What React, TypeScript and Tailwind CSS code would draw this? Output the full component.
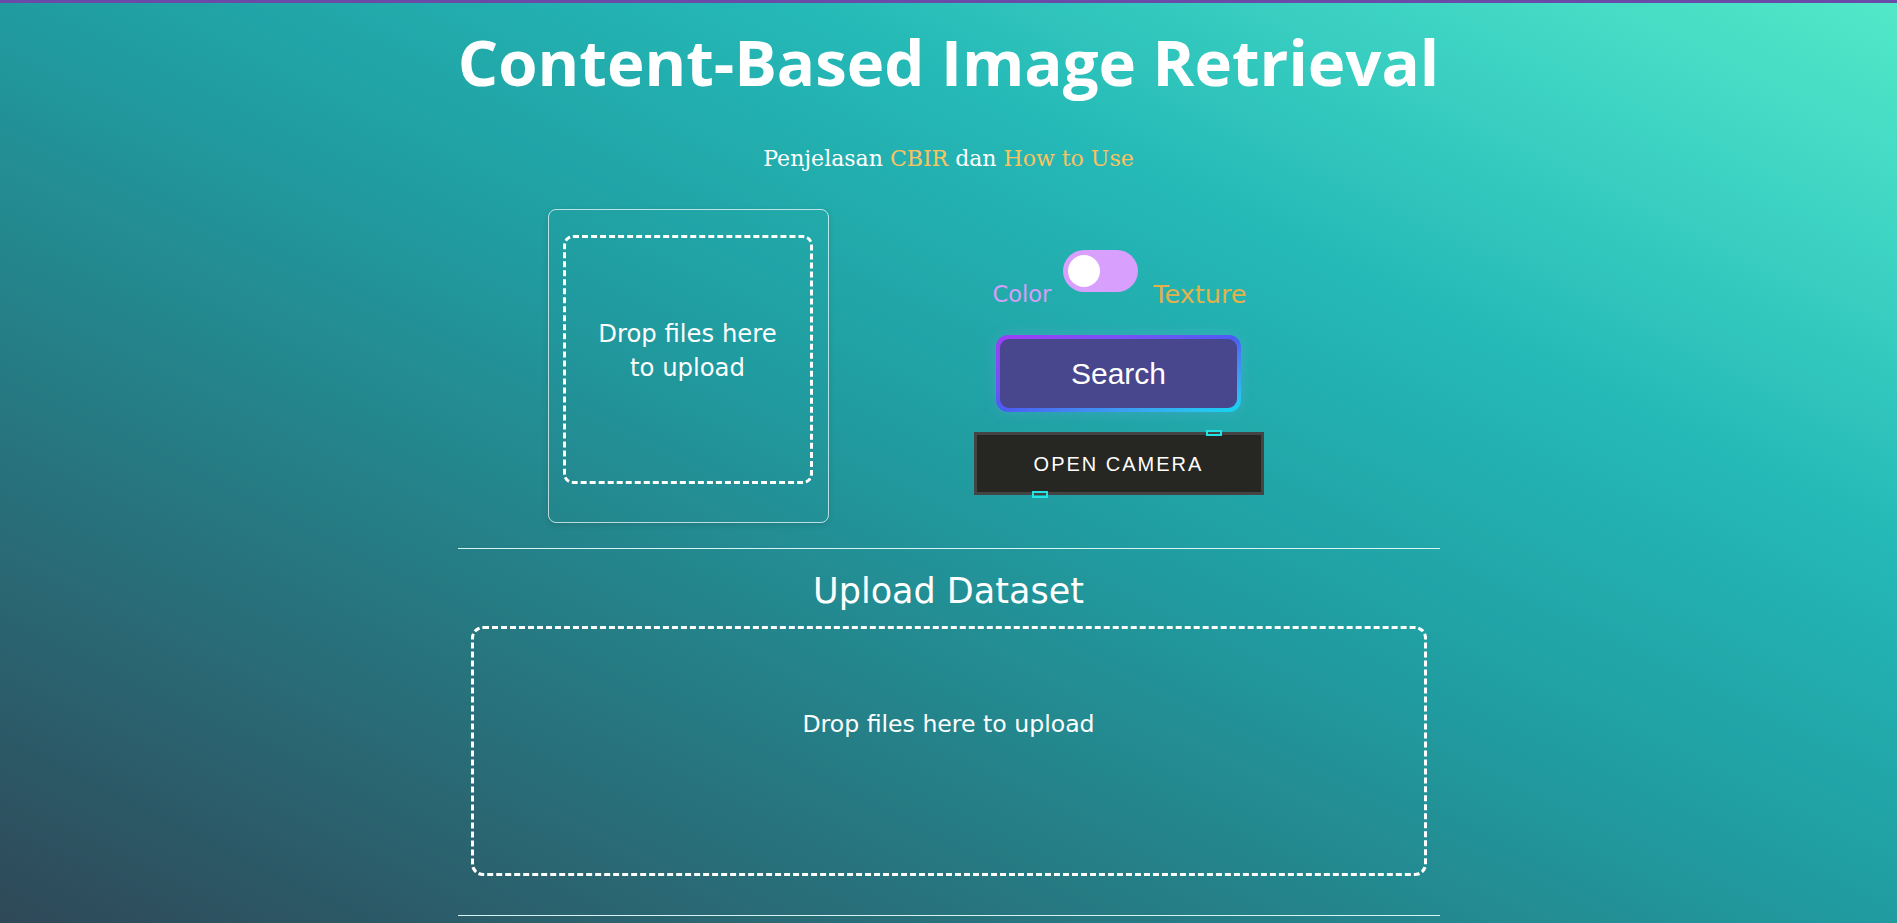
import React from "react";

const comic = { fontFamily: '"DejaVu Sans", "Noto Sans", sans-serif' };

function Toggle() {
  return (
    <div className="relative w-[75px] h-[42px] rounded-full bg-[#d8a0fc] mb-[16px]">
      <div className="absolute left-[5px] top-[5px] w-[32px] h-[32px] rounded-full bg-white" />
    </div>
  );
}

export default function App() {
  return (
    <div className="min-h-screen w-full bg-[linear-gradient(to_top_right,#2f4858_0%,#209ca0_50%,#24b8b6_70%,#3dd3c3_86%,#52e8c8_100%)] text-white">
      <div className="h-[3px] bg-[#6b4ba8]" />
      <div className="w-[982px] mx-auto">
        <h1
          className="mt-[27px] text-center text-[63.5px] font-bold leading-[64px] whitespace-nowrap"
          style={{ fontFamily: '"Open Sans", "Noto Sans", sans-serif' }}
        >
          Content-Based Image Retrieval
        </h1>

        <p
          className="mt-[53px] text-center text-[22px] leading-[24px]"
          style={{ fontFamily: '"DejaVu Serif", "Liberation Serif", serif' }}
        >
          Penjelasan <span className="text-[#fbc35f]">CBIR</span> dan{" "}
          <span className="text-[#fbc35f]">How to Use</span>
        </p>

        {/* query section */}
        <div className="mt-[38px] flex items-start pl-[90px]">
          <div className="w-[281px] h-[314px] border border-white/70 rounded-[8px] pl-[14px] pt-[25px] shadow-[0_2px_6px_rgba(0,0,0,0.12)]">
            <div
              className="w-[250px] h-[249px] border-[3px] border-dashed border-white rounded-[10px] flex items-center justify-center text-center text-[24.3px] leading-[34px] pb-[18px]"
              style={comic}
            >
              Drop files here
              <br />
              to upload
            </div>
          </div>

          <div className="ml-[145px] w-[290px] pt-[41px] flex flex-col items-center">
            <div className="flex items-end justify-center ml-[2px]" style={comic}>
              <span className="mr-[12px] text-[22.5px] leading-[28px] text-[#d49ff8]">Color</span>
              <Toggle />
              <span className="ml-[15px] text-[25.5px] leading-[28px] text-[#e2b24a]">Texture</span>
            </div>

            <button className="mt-[27px] w-[245px] h-[77px] rounded-[12px] p-[4px] bg-linear-to-br from-[#a03cf6] via-[#4b5cf2] to-[#0bd8ef] shadow-[0_0_14px_rgba(140,170,255,0.25)]">
              <div
                className="w-full h-full rounded-[9px] bg-[#48468c] flex items-center justify-center text-[30px]"
                style={{ fontFamily: '"Liberation Sans", Arial, sans-serif' }}
              >
                Search
              </div>
            </button>

            <div className="relative mt-[20px]">
              <button
                className="w-[290px] h-[63px] bg-[#262622] border-[3px] border-[#444444] text-[20px] tracking-[2px] text-white"
                style={{ fontFamily: '"Liberation Sans", Arial, sans-serif' }}
              >
                OPEN CAMERA
              </button>
              <div className="absolute left-[232px] top-[-2px] w-[16px] h-[6px] border-2 border-[#22e3e6]" />
              <div className="absolute left-[58px] top-[59px] w-[16px] h-[7px] border-2 border-[#22e3e6]" />
            </div>
          </div>
        </div>

        <div className="mt-[25px] h-px bg-[#d6f5f2]" />

        <h2 className="mt-[21px] text-center text-[35px] leading-[42px]" style={comic}>
          Upload Dataset
        </h2>

        <div
          className="mt-[14px] mx-auto w-[956px] h-[250px] border-[3px] border-dashed border-white rounded-[12px] pt-[79px] text-center text-[23.6px] leading-[32px]"
          style={comic}
        >
          Drop files here to upload
        </div>

        <div className="mt-[39px] h-px bg-[#d6f5f2]" />
      </div>
    </div>
  );
}
